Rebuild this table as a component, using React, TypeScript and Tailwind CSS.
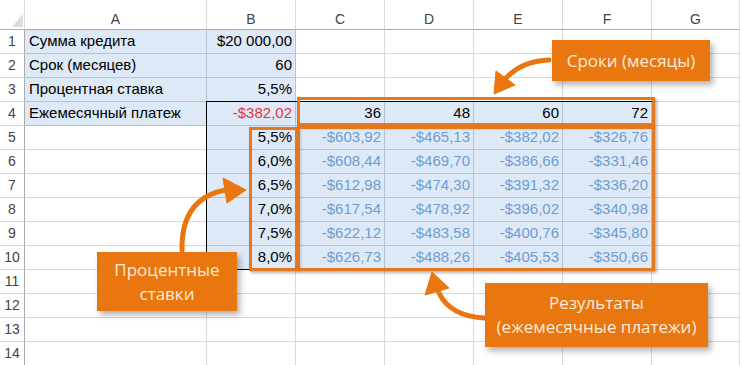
const cols = ['', 'A', 'B', 'C', 'D', 'E', 'F', 'G']

const data: string[][] = [
    ['Сумма кредита', '$20 000,00'],
    ['Срок (месяцев)', '60'],
    ['Процентная ставка', '5,5%'],
    ['Ежемесячный платеж', '-$382,02', '36', '48', '60', '72'],
    ['', '5,5%', '-$603,92', '-$465,13', '-$382,02', '-$326,76'],
    ['', '6,0%', '-$608,44', '-$469,70', '-$386,66', '-$331,46'],
    ['', '6,5%', '-$612,98', '-$474,30', '-$391,32', '-$336,20'],
    ['', '7,0%', '-$617,54', '-$478,92', '-$396,02', '-$340,98'],
    ['', '7,5%', '-$622,12', '-$483,58', '-$400,76', '-$345,80'],
    ['', '8,0%', '-$626,73', '-$488,26', '-$405,53', '-$350,66'],
    [],
    [],
    [],
    [],
]

function isBlue(r: number, c: number) {
    if (c === 1) return r < 4
    if (c === 2) return r < 10
    if (c >= 3 && c <= 6) return r >= 3 && r < 10
    return false
}

function Cell({ r, c }: { r: number; c: number }) {
    const text = data[r][c - 1] ?? ''
    const blue = isBlue(r, c)
    const red = r === 3 && c === 2
    const result = r >= 4 && r < 10 && c >= 3 && c <= 6
    return (
        <div
            className={
                'flex items-center h-[24px] border-r border-b text-[15px] whitespace-nowrap ' +
                (blue ? 'bg-[#dde9f6] border-[#b7c0cb] ' : 'bg-white border-[#d9d9d9] ') +
                (c === 1 ? 'justify-start pl-[4px] ' : 'justify-end pr-[3px] ') +
                (red ? 'text-[#e5323f]' : result ? 'text-[#6c9dd3]' : 'text-black')
            }
        >
            {text}
        </div>
    )
}

function Callout({ className, children }: { className: string; children: React.ReactNode }) {
    return (
        <div
            className={
                'absolute flex flex-col items-center justify-center bg-[#e9760f] text-[#fdebd8] text-[17px] leading-[24px] shadow-[3px_4px_6px_rgba(0,0,0,0.3)] ' +
                className
            }
            style={{ fontFamily: '"Open Sans", "Noto Sans", sans-serif' }}
        >
            {children}
        </div>
    )
}

export default function App() {
    return (
        <div
            className="relative w-[740px] h-[365px] overflow-hidden bg-white"
            style={{ fontFamily: '"Liberation Sans", Arial, sans-serif' }}
        >
            <div className="grid grid-cols-[25px_182px_89px_89px_89px_89px_89px_88px]">
                {/* column headers */}
                {cols.map((col, i) => (
                    <div
                        key={col + i}
                        className="relative flex items-center justify-center h-[30px] pt-[9px] border-r border-b border-r-[#dadada] border-b-[#ababab] text-[14px] text-[#444]"
                    >
                        {i === 0 ? (
                            <svg className="absolute left-[12px] top-[14px]" width="11" height="13" viewBox="0 0 11 13">
                                <polygon points="0,13 11,13 11,0" fill="#dcdcdc" />
                            </svg>
                        ) : (
                            col
                        )}
                    </div>
                ))}
                {data.map((_, r) => (
                    <div key={r} className="contents">
                        <div className="flex items-center justify-center h-[24px] border-r border-b border-r-[#ababab] border-b-[#d9d9d9] text-[14px] text-[#444]">
                            {r + 1}
                        </div>
                        {[1, 2, 3, 4, 5, 6, 7].map(c => (
                            <Cell key={c} r={r} c={c} />
                        ))}
                    </div>
                ))}
            </div>

            {/* table outline B4:F10 */}
            <div className="absolute left-[206px] top-[101px] w-[447px] h-[169px] border border-black" />

            {/* highlight boxes */}
            <div className="absolute left-[297px] top-[97px] w-[358px] h-[29px] border-[3px] border-[#e5781f] shadow-[2px_2px_3px_rgba(0,0,0,0.3)]" />
            <div className="absolute left-[249px] top-[127px] w-[49px] h-[144px] border-[3px] border-[#e5781f] shadow-[2px_2px_3px_rgba(0,0,0,0.3)]" />
            <div className="absolute left-[297px] top-[126px] w-[358px] h-[145px] border-[3px] border-[#e5781f] shadow-[2px_2px_3px_rgba(0,0,0,0.3)]" />

            {/* arrows */}
            <svg className="absolute left-0 top-0 pointer-events-none" width="740" height="365" viewBox="0 0 740 365">
                <g fill="#e9760f" stroke="#e9760f" strokeLinejoin="round">
                    <path d="M549 60 Q522 61 506 78" fill="none" strokeWidth="5" strokeLinecap="round" />
                    <polygon points="494,94 496,71 515,85" strokeWidth="1" />
                    <path d="M182 250 Q181 198 226 190" fill="none" strokeWidth="5" strokeLinecap="round" />
                    <polygon points="246,190 223,178 227,203" strokeWidth="1" />
                    <path d="M484 318 Q450 316 439 293" fill="none" strokeWidth="5" strokeLinecap="round" />
                    <polygon points="432,272 425,295 449,288" strokeWidth="1" />
                </g>
            </svg>

            {/* callouts */}
            <Callout className="left-[552px] top-[40px] w-[158px] h-[41px]">Сроки (месяцы)</Callout>
            <Callout className="left-[97px] top-[252px] w-[140px] h-[59px]">
                <span>Процентные</span>
                <span>ставки</span>
            </Callout>
            <Callout className="left-[485px] top-[283px] w-[223px] h-[64px]">
                <span>Результаты</span>
                <span>(ежемесячные платежи)</span>
            </Callout>
        </div>
    )
}
